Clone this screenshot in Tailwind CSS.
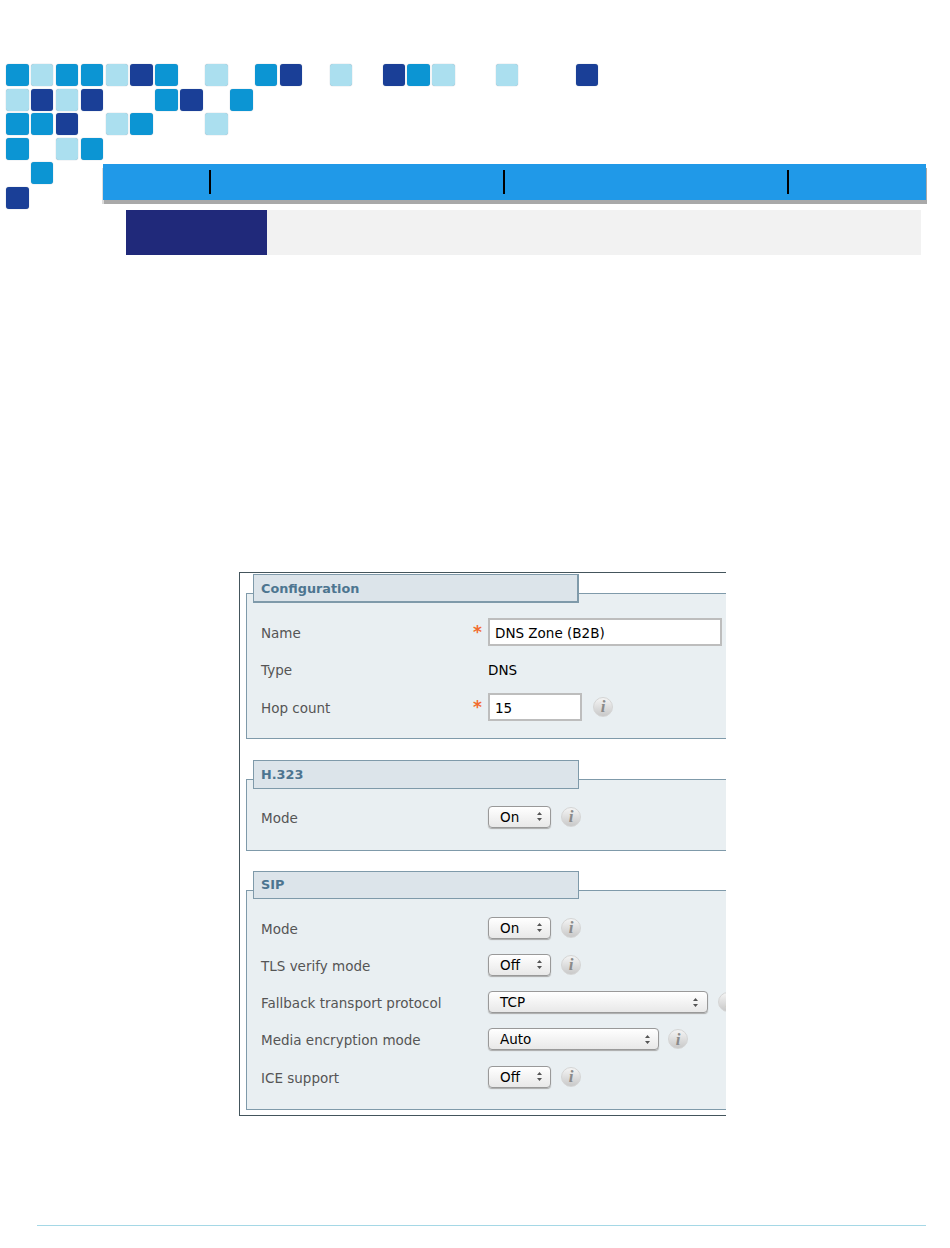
<!DOCTYPE html>
<html lang="en">
<head>
  <meta charset="UTF-8" />
  <meta name="viewport" content="width=device-width, initial-scale=1" />
  <title>DNS Zone Configuration</title>
  <script src="https://cdn.jsdelivr.net/npm/@tailwindcss/browser@4"></script>
</head>
<body class="bg-white h-[1248px] overflow-hidden font-['DejaVu_Sans',sans-serif]">
  <!-- header: square pattern, blue bar, title band -->
  <header class="pt-[64px]">
    <div class="pl-[6px] flex h-[24.5px]">
      <span class="w-[22.5px] h-[22px] mr-[2.4px] rounded-[3px] bg-[#0c95d3] shadow-[0_0_1px_#8899a8]"></span>
      <span class="w-[22.5px] h-[22px] mr-[2.4px] rounded-[3px] bg-[#abdfef] shadow-[0_0_1px_#8899a8]"></span>
      <span class="w-[22.5px] h-[22px] mr-[2.4px] rounded-[3px] bg-[#0c95d3] shadow-[0_0_1px_#8899a8]"></span>
      <span class="w-[22.5px] h-[22px] mr-[2.4px] rounded-[3px] bg-[#0c95d3] shadow-[0_0_1px_#8899a8]"></span>
      <span class="w-[22.5px] h-[22px] mr-[2.4px] rounded-[3px] bg-[#abdfef] shadow-[0_0_1px_#8899a8]"></span>
      <span class="w-[22.5px] h-[22px] mr-[2.4px] rounded-[3px] bg-[#1a3f97] shadow-[0_0_1px_#8899a8]"></span>
      <span class="w-[22.5px] h-[22px] mr-[2.4px] rounded-[3px] bg-[#0c95d3] shadow-[0_0_1px_#8899a8]"></span>
      <span class="w-[22.5px] h-[22px] ml-[24.9px] mr-[2.4px] rounded-[3px] bg-[#abdfef] shadow-[0_0_1px_#8899a8]"></span>
      <span class="w-[22.5px] h-[22px] ml-[24.9px] mr-[2.4px] rounded-[3px] bg-[#0c95d3] shadow-[0_0_1px_#8899a8]"></span>
      <span class="w-[22.5px] h-[22px] mr-[2.4px] rounded-[3px] bg-[#1a3f97] shadow-[0_0_1px_#8899a8]"></span>
      <span class="w-[22.5px] h-[22px] ml-[24.9px] rounded-[3px] bg-[#abdfef] shadow-[0_0_1px_#8899a8]"></span>
      <span class="w-[22.5px] h-[22px] ml-[30.5px] mr-[2.4px] rounded-[3px] bg-[#1a3f97] shadow-[0_0_1px_#8899a8]"></span>
      <span class="w-[22.5px] h-[22px] mr-[2.4px] rounded-[3px] bg-[#0c95d3] shadow-[0_0_1px_#8899a8]"></span>
      <span class="w-[22.5px] h-[22px] rounded-[3px] bg-[#abdfef] shadow-[0_0_1px_#8899a8]"></span>
      <span class="w-[22.5px] h-[22px] ml-[41px] rounded-[3px] bg-[#abdfef] shadow-[0_0_1px_#8899a8]"></span>
      <span class="w-[22.5px] h-[22px] ml-[57.5px] rounded-[3px] bg-[#1a3f97] shadow-[0_0_1px_#8899a8]"></span>
    </div>
    <div class="pl-[6px] flex h-[24.5px]">
      <span class="w-[22.5px] h-[22px] mr-[2.4px] rounded-[3px] bg-[#abdfef] shadow-[0_0_1px_#8899a8]"></span>
      <span class="w-[22.5px] h-[22px] mr-[2.4px] rounded-[3px] bg-[#1a3f97] shadow-[0_0_1px_#8899a8]"></span>
      <span class="w-[22.5px] h-[22px] mr-[2.4px] rounded-[3px] bg-[#abdfef] shadow-[0_0_1px_#8899a8]"></span>
      <span class="w-[22.5px] h-[22px] mr-[2.4px] rounded-[3px] bg-[#1a3f97] shadow-[0_0_1px_#8899a8]"></span>
      <span class="w-[22.5px] h-[22px] ml-[49.8px] mr-[2.4px] rounded-[3px] bg-[#0c95d3] shadow-[0_0_1px_#8899a8]"></span>
      <span class="w-[22.5px] h-[22px] mr-[2.4px] rounded-[3px] bg-[#1a3f97] shadow-[0_0_1px_#8899a8]"></span>
      <span class="w-[22.5px] h-[22px] ml-[24.9px] rounded-[3px] bg-[#0c95d3] shadow-[0_0_1px_#8899a8]"></span>
    </div>
    <div class="pl-[6px] flex h-[24.5px]">
      <span class="w-[22.5px] h-[22px] mr-[2.4px] rounded-[3px] bg-[#0c95d3] shadow-[0_0_1px_#8899a8]"></span>
      <span class="w-[22.5px] h-[22px] mr-[2.4px] rounded-[3px] bg-[#0c95d3] shadow-[0_0_1px_#8899a8]"></span>
      <span class="w-[22.5px] h-[22px] mr-[2.4px] rounded-[3px] bg-[#1a3f97] shadow-[0_0_1px_#8899a8]"></span>
      <span class="w-[22.5px] h-[22px] ml-[24.9px] mr-[2.4px] rounded-[3px] bg-[#abdfef] shadow-[0_0_1px_#8899a8]"></span>
      <span class="w-[22.5px] h-[22px] mr-[2.4px] rounded-[3px] bg-[#0c95d3] shadow-[0_0_1px_#8899a8]"></span>
      <span class="w-[22.5px] h-[22px] ml-[49.8px] rounded-[3px] bg-[#abdfef] shadow-[0_0_1px_#8899a8]"></span>
    </div>
    <div class="pl-[6px] flex h-[24.5px]">
      <span class="w-[22.5px] h-[22px] mr-[2.4px] rounded-[3px] bg-[#0c95d3] shadow-[0_0_1px_#8899a8]"></span>
      <span class="w-[22.5px] h-[22px] ml-[24.9px] mr-[2.4px] rounded-[3px] bg-[#abdfef] shadow-[0_0_1px_#8899a8]"></span>
      <span class="w-[22.5px] h-[22px] rounded-[3px] bg-[#0c95d3] shadow-[0_0_1px_#8899a8]"></span>
    </div>
    <div class="flex">
      <div class="w-[103px] pl-[6px] shrink-0">
        <div class="h-[25px] pl-[24.9px]">
          <div class="w-[22.5px] h-[22px] rounded-[3px] bg-[#0c95d3] shadow-[0_0_1px_#8899a8]"></div>
        </div>
        <div class="w-[22.5px] h-[22px] rounded-[3px] bg-[#1a3f97] shadow-[0_0_1px_#8899a8]"></div>
      </div>
      <div class="pt-[2px]">
        <div class="w-[823px] h-[36px] bg-[#2099e8] shadow-[1px_4px_0_#a9a9a9,-1px_4px_0_#dcdcdc] flex items-center">
          <span class="w-[2px] h-[24px] bg-black ml-[106px]"></span>
          <span class="w-[2px] h-[24px] bg-black ml-[292px]"></span>
          <span class="w-[2px] h-[24px] bg-black ml-[282px]"></span>
        </div>
      </div>
    </div>
    <div class="ml-[126px] mt-px w-[795px] h-[45px] bg-[#f2f2f2]">
      <div class="w-[141px] h-full bg-[#20297a]"></div>
    </div>
  </header>

  <!-- screenshot of the zone settings form, clipped on the right -->
  <main class="ml-[239px] mt-[317px] w-[487px] h-[544px] border-y border-l border-[#44555c] overflow-hidden pt-[20px] pl-[6px]">
    <section class="w-[520px] h-[146px] border border-[#7f9aaa] bg-[#e9eff2]">
      <h2 class="ml-[6px] -mt-[20px] w-[326px] h-[29px] pl-[7px] bg-[#dce4ea] border border-b-2 border-r-2 border-[#7f9aaa] text-[12.8px] leading-[27px] font-bold text-[#4d7590]">Configuration</h2>
      <div class="pt-[10px] text-[13.5px] text-[#555]">
        <div class="flex items-center h-[37.5px]">
          <span class="w-[241px] pl-[14px] pt-[2px] shrink-0">Name</span>
          <span class="text-[#f26b2e] font-bold text-[17px] w-[0] relative -left-[15px] top-[1px]">*</span>
          <div class="w-[234px] h-[28px] bg-white border-2 border-[#bdbdbd] pl-[5px] pt-px leading-[25px] text-black">DNS Zone (B2B)</div>
        </div>
        <div class="flex items-center h-[37.5px]">
          <span class="w-[241px] pl-[14px] pt-[2px] shrink-0">Type</span>
          <span class="text-black pt-[2px]">DNS</span>
        </div>
        <div class="flex items-center h-[37.5px]">
          <span class="w-[241px] pl-[14px] pt-[2px] shrink-0">Hop count</span>
          <span class="text-[#f26b2e] font-bold text-[17px] w-[0] relative -left-[15px] top-[1px]">*</span>
          <div class="w-[94px] h-[28px] bg-white border-2 border-[#bdbdbd] pl-[5px] pt-px leading-[25px] text-black">15</div>
          <span class="ml-[11px] w-[20px] h-[20px] rounded-full bg-gradient-to-b from-[#f4f4f4] to-[#c9c9c9] border border-[#d5d5d5] flex items-center justify-center font-['Liberation_Serif',serif] italic font-bold text-[17px] text-[#8a8a8a]">i</span>
        </div>
      </div>
    </section>

    <section class="mt-[40px] w-[520px] h-[72px] border border-[#7f9aaa] bg-[#e9eff2]">
      <h2 class="ml-[6px] -mt-[20px] w-[326px] h-[29px] pl-[7px] bg-[#dce4ea] border border-[#7f9aaa] text-[12.8px] leading-[27px] font-bold text-[#4d7590]">H.323</h2>
      <div class="pt-[9px] text-[13.5px] text-[#555]">
        <div class="flex items-center h-[37.5px]">
          <span class="w-[241px] pl-[14px] pt-[2px] shrink-0">Mode</span>
          <div class="w-[63px] h-[22px] bg-gradient-to-b from-white to-[#e8e8e8] border border-[#999] shadow-[0_1px_1px_#aaa] rounded-[4px] pl-[11px] pr-[7px] flex items-center justify-between text-black">On<svg width="7" height="11" viewBox="0 0 7 11"><path d="M3.5 1 6 4H1zM3.5 10 1 7h5z" fill="#555"/></svg></div>
          <span class="ml-[10px] w-[20px] h-[20px] rounded-full bg-gradient-to-b from-[#f4f4f4] to-[#c9c9c9] border border-[#d5d5d5] flex items-center justify-center font-['Liberation_Serif',serif] italic font-bold text-[17px] text-[#8a8a8a]">i</span>
        </div>
      </div>
    </section>

    <section class="mt-[39px] w-[520px] h-[220px] border border-[#7f9aaa] bg-[#e9eff2]">
      <h2 class="ml-[6px] -mt-[20px] w-[326px] h-[28px] pl-[7px] bg-[#dce4ea] border border-[#7f9aaa] text-[12.8px] leading-[26px] font-bold text-[#4d7590]">SIP</h2>
      <div class="pt-[10px] text-[13.5px] text-[#555]">
        <div class="flex items-center h-[37.25px]">
          <span class="w-[241px] pl-[14px] pt-[2px] shrink-0">Mode</span>
          <div class="w-[63px] h-[22px] bg-gradient-to-b from-white to-[#e8e8e8] border border-[#999] shadow-[0_1px_1px_#aaa] rounded-[4px] pl-[11px] pr-[7px] flex items-center justify-between text-black">On<svg width="7" height="11" viewBox="0 0 7 11"><path d="M3.5 1 6 4H1zM3.5 10 1 7h5z" fill="#555"/></svg></div>
          <span class="ml-[10px] w-[20px] h-[20px] rounded-full bg-gradient-to-b from-[#f4f4f4] to-[#c9c9c9] border border-[#d5d5d5] flex items-center justify-center font-['Liberation_Serif',serif] italic font-bold text-[17px] text-[#8a8a8a]">i</span>
        </div>
        <div class="flex items-center h-[37.25px]">
          <span class="w-[241px] pl-[14px] pt-[2px] shrink-0">TLS verify mode</span>
          <div class="w-[63px] h-[22px] bg-gradient-to-b from-white to-[#e8e8e8] border border-[#999] shadow-[0_1px_1px_#aaa] rounded-[4px] pl-[11px] pr-[7px] flex items-center justify-between text-black">Off<svg width="7" height="11" viewBox="0 0 7 11"><path d="M3.5 1 6 4H1zM3.5 10 1 7h5z" fill="#555"/></svg></div>
          <span class="ml-[10px] w-[20px] h-[20px] rounded-full bg-gradient-to-b from-[#f4f4f4] to-[#c9c9c9] border border-[#d5d5d5] flex items-center justify-center font-['Liberation_Serif',serif] italic font-bold text-[17px] text-[#8a8a8a]">i</span>
        </div>
        <div class="flex items-center h-[37.25px]">
          <span class="w-[241px] pl-[14px] pt-[2px] shrink-0">Fallback transport protocol</span>
          <div class="w-[220px] h-[22px] bg-gradient-to-b from-white to-[#e8e8e8] border border-[#999] shadow-[0_1px_1px_#aaa] rounded-[4px] pl-[11px] pr-[8px] flex items-center justify-between text-black">TCP<svg width="7" height="11" viewBox="0 0 7 11"><path d="M3.5 1 6 4H1zM3.5 10 1 7h5z" fill="#555"/></svg></div>
          <span class="ml-[10px] w-[20px] h-[20px] rounded-full bg-gradient-to-b from-[#f4f4f4] to-[#c9c9c9] border border-[#d5d5d5] flex items-center justify-center font-['Liberation_Serif',serif] italic font-bold text-[17px] text-[#8a8a8a]">i</span>
        </div>
        <div class="flex items-center h-[37.25px]">
          <span class="w-[241px] pl-[14px] pt-[2px] shrink-0">Media encryption mode</span>
          <div class="w-[171px] h-[22px] bg-gradient-to-b from-white to-[#e8e8e8] border border-[#999] shadow-[0_1px_1px_#aaa] rounded-[4px] pl-[11px] pr-[7px] flex items-center justify-between text-black">Auto<svg width="7" height="11" viewBox="0 0 7 11"><path d="M3.5 1 6 4H1zM3.5 10 1 7h5z" fill="#555"/></svg></div>
          <span class="ml-[9px] w-[20px] h-[20px] rounded-full bg-gradient-to-b from-[#f4f4f4] to-[#c9c9c9] border border-[#d5d5d5] flex items-center justify-center font-['Liberation_Serif',serif] italic font-bold text-[17px] text-[#8a8a8a]">i</span>
        </div>
        <div class="flex items-center h-[37.25px]">
          <span class="w-[241px] pl-[14px] pt-[2px] shrink-0">ICE support</span>
          <div class="w-[63px] h-[22px] bg-gradient-to-b from-white to-[#e8e8e8] border border-[#999] shadow-[0_1px_1px_#aaa] rounded-[4px] pl-[11px] pr-[7px] flex items-center justify-between text-black">Off<svg width="7" height="11" viewBox="0 0 7 11"><path d="M3.5 1 6 4H1zM3.5 10 1 7h5z" fill="#555"/></svg></div>
          <span class="ml-[10px] w-[20px] h-[20px] rounded-full bg-gradient-to-b from-[#f4f4f4] to-[#c9c9c9] border border-[#d5d5d5] flex items-center justify-center font-['Liberation_Serif',serif] italic font-bold text-[17px] text-[#8a8a8a]">i</span>
        </div>
      </div>
    </section>
  </main>

  <footer class="ml-[37px] mt-[109px] w-[889px] border-t border-[#a5d8e6]"></footer>
</body>
</html>
